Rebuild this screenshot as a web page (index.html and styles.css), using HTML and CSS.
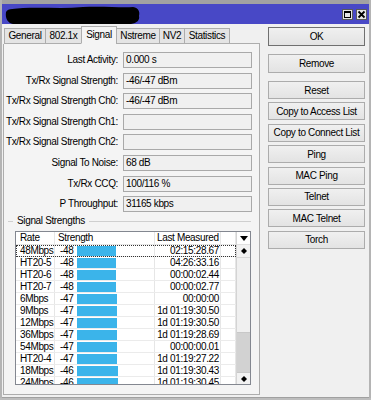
FILE: index.html
```html
<!DOCTYPE html>
<html>
<head>
<meta charset="utf-8">
<link rel="stylesheet" href="styles.css">
</head>
<body>
<div class="win">
  <div class="topstrip"></div>
  <div class="titlebar">
    <svg class="redact" width="140" height="20" viewBox="0 0 140 20"><path d="M3 8 C5 4 12 5 20 4 C40 3 60 5 80 3 C100 2 120 4 130 3 C136 4 137 8 136 12 C137 16 134 19 128 20 L10 20 C5 19 2 15 3 8 Z" fill="#000"/></svg>
    <div class="tbtns">
      <span class="tbtn"><svg width="9" height="9" viewBox="0 0 9 9"><rect x="1.5" y="1.5" width="6" height="6" fill="none" stroke="#000" stroke-width="1"/><rect x="1" y="1" width="7" height="2" fill="#000"/></svg></span>
      <span class="tbtn"><svg width="9" height="9" viewBox="0 0 9 9"><path d="M1.5 1.5 L7.5 7.5 M7.5 1.5 L1.5 7.5" stroke="#000" stroke-width="1.8"/></svg></span>
    </div>
  </div>
  <div class="client">
    <div class="lcol">
      <div class="tabs">
        <div class="tab">General</div>
        <div class="tab">802.1x</div>
        <div class="tab sel">Signal</div>
        <div class="tab">Nstreme</div>
        <div class="tab">NV2</div>
        <div class="tab">Statistics</div>
        <div class="tabfill"></div>
      </div>
      <div class="panel">
        <div class="form">
          <div class="row"><span class="lbl">Last Activity:</span><span class="box">0.000 s</span></div>
          <div class="row"><span class="lbl">Tx/Rx Signal Strength:</span><span class="box">-46/-47 dBm</span></div>
          <div class="row"><span class="lbl">Tx/Rx Signal Strength Ch0:</span><span class="box">-46/-47 dBm</span></div>
          <div class="row"><span class="lbl">Tx/Rx Signal Strength Ch1:</span><span class="box"></span></div>
          <div class="row"><span class="lbl">Tx/Rx Signal Strength Ch2:</span><span class="box"></span></div>
          <div class="row"><span class="lbl">Signal To Noise:</span><span class="box">68 dB</span></div>
          <div class="row"><span class="lbl">Tx/Rx CCQ:</span><span class="box">100/116 %</span></div>
          <div class="row"><span class="lbl">P Throughput:</span><span class="box">31165 kbps</span></div>
        </div>
        <div class="group"><span class="gls"></span><span class="gt">Signal Strengths</span><span class="gll"></span></div>
        <div class="table">
          <div class="list">
            <div class="th"><span class="c1">Rate</span><span class="c2">Strength</span><span class="c3">Last Measured</span><span class="c4"></span></div>
            <div class="tr focus"><span class="c1">48Mbps</span><span class="c2"><span class="num">-48</span><span class="bar" style="width:39px"></span></span><span class="c3">02:15:28.67</span><span class="c4"></span></div>
            <div class="tr"><span class="c1">HT20-5</span><span class="c2"><span class="num">-48</span><span class="bar" style="width:39px"></span></span><span class="c3">04:26:33.16</span><span class="c4"></span></div>
            <div class="tr"><span class="c1">HT20-6</span><span class="c2"><span class="num">-48</span><span class="bar" style="width:39px"></span></span><span class="c3">00:00:02.44</span><span class="c4"></span></div>
            <div class="tr"><span class="c1">HT20-7</span><span class="c2"><span class="num">-48</span><span class="bar" style="width:39px"></span></span><span class="c3">00:00:02.77</span><span class="c4"></span></div>
            <div class="tr"><span class="c1">6Mbps</span><span class="c2"><span class="num">-47</span><span class="bar" style="width:40px"></span></span><span class="c3">00:00:00</span><span class="c4"></span></div>
            <div class="tr"><span class="c1">9Mbps</span><span class="c2"><span class="num">-47</span><span class="bar" style="width:40px"></span></span><span class="c3">1d 01:19:30.50</span><span class="c4"></span></div>
            <div class="tr"><span class="c1">12Mbps</span><span class="c2"><span class="num">-47</span><span class="bar" style="width:40px"></span></span><span class="c3">1d 01:19:30.50</span><span class="c4"></span></div>
            <div class="tr"><span class="c1">36Mbps</span><span class="c2"><span class="num">-47</span><span class="bar" style="width:40px"></span></span><span class="c3">1d 01:19:28.69</span><span class="c4"></span></div>
            <div class="tr"><span class="c1">54Mbps</span><span class="c2"><span class="num">-47</span><span class="bar" style="width:40px"></span></span><span class="c3">00:00:00.01</span><span class="c4"></span></div>
            <div class="tr"><span class="c1">HT20-4</span><span class="c2"><span class="num">-47</span><span class="bar" style="width:40px"></span></span><span class="c3">1d 01:19:27.22</span><span class="c4"></span></div>
            <div class="tr"><span class="c1">18Mbps</span><span class="c2"><span class="num">-46</span><span class="bar" style="width:41px"></span></span><span class="c3">1d 01:19:30.43</span><span class="c4"></span></div>
            <div class="tr"><span class="c1">24Mbps</span><span class="c2"><span class="num">-46</span><span class="bar" style="width:41px"></span></span><span class="c3">1d 01:19:30.45</span><span class="c4"></span></div>
          </div>
          <div class="sbar">
            <div class="sh"><svg width="8" height="5" viewBox="0 0 8 5"><path d="M0 0 H8 L4 5 Z" fill="#000"/></svg></div>
            <div class="sbtn"><svg width="6" height="6" viewBox="0 0 6 6"><path d="M3 0 L6 3 L3 6 L0 3 Z" fill="#000"/></svg></div>
            <div class="strack"></div>
            <div class="sthumb"></div>
            <div class="sbtn dn"><svg width="6" height="6" viewBox="0 0 6 6"><path d="M3 0 L6 3 L3 6 L0 3 Z" fill="#000"/></svg></div>
          </div>
        </div>
      </div>
    </div>
    <div class="rcol">
      <div class="btn big ok">OK</div>
      <div class="btn big sp">Remove</div>
      <div class="btn sp">Reset</div>
      <div class="btn">Copy to Access List</div>
      <div class="btn">Copy to Connect List</div>
      <div class="btn">Ping</div>
      <div class="btn">MAC Ping</div>
      <div class="btn">Telnet</div>
      <div class="btn">MAC Telnet</div>
      <div class="btn">Torch</div>
    </div>
  </div>
</div>
</body>
</html>
```

FILE: styles.css
```css
* { box-sizing: border-box; margin: 0; padding: 0; }
html, body { width: 371px; height: 400px; overflow: hidden; }
body {
  background: #bdbdbd;
  font-family: "Liberation Sans", Arial, sans-serif;
  font-size: 10px;
  letter-spacing: -0.35px;
  color: #000;
}
.win {
  width: 371px;
  height: 398px;
  display: flex;
  flex-direction: column;
  background: #f0f0f0;
  border-left: 2px solid #b4b4b4;
  border-right: 2px solid #b4b4b4;
}
.topstrip { height: 4px; background: #a2a2a2; }
.titlebar {
  height: 20px;
  background: #4848c6;
  display: flex;
  align-items: flex-start;
}
.redact { display: block; margin-left: 1px; }
.tbtns {
  margin-left: auto;
  margin-right: 2px;
  padding-top: 5px;
  display: flex;
  gap: 3px;
}
.tbtn {
  width: 11px;
  height: 11px;
  background: #e6e6e6;
  border: 1px solid #5a5a5a;
  display: flex;
  align-items: center;
  justify-content: center;
}
.tbtn svg { display: block; }
.client {
  flex: 1;
  display: flex;
  padding: 2px 0 2px 1px;
  border-bottom: 1px solid #a0a0a0;
}
.lcol { width: 257px; display: flex; flex-direction: column; }
.tabs { height: 18px; display: flex; align-items: flex-end; padding-left: 1px; }
.tab {
  height: 16px;
  border: 1px solid #adadad;
  margin-right: -1px;
  background: #e4e4e4;
  text-align: center;
  line-height: 14px;
  white-space: nowrap;
}
.tab:nth-child(1) { width: 42px; }
.tab:nth-child(2) { width: 37px; }
.tab:nth-child(3) { width: 36px; }
.tab:nth-child(4) { width: 44px; }
.tab:nth-child(5) { width: 26px; }
.tab:nth-child(6) { width: 46px; }
.tab.sel {
  height: 18px;
  background: #f4f4f4;
  border-bottom-color: #f4f4f4;
  line-height: 15px;
}
.tabfill { flex: 1; height: 18px; border-bottom: 1px solid #adadad; margin-left: 1px; }
.panel {
  flex: 1;
  background: #f4f4f4;
  border: 1px solid #adadad;
  border-top: none;
  padding-top: 8px;
}
.form { display: flex; flex-direction: column; gap: 4.6px; }
.row { display: flex; height: 16px; }
.lbl { width: 114px; text-align: right; line-height: 16px; white-space: nowrap; }
.box {
  width: 129px;
  margin-left: 5px;
  border: 1px solid #a9a9a9;
  background: #f0f0f0;
  padding-left: 2px;
  line-height: 14px;
  white-space: nowrap;
}
.group { display: flex; align-items: center; height: 12px; margin-top: 3px; }
.gls { width: 5px; margin-left: 4px; border-top: 1px solid #cfcfcf; }
.gt { padding: 0 4px; line-height: 12px; }
.gll { flex: 1; margin-right: 8px; border-top: 1px solid #cfcfcf; }
.table {
  margin: 4px 8px 0 11px;
  height: 154px;
  border: 1px solid #838790;
  background: #fff;
  display: grid;
  grid-template-columns: 220px 14px;
  overflow: hidden;
}
.list { overflow: hidden; }
.th, .tr {
  display: grid;
  grid-template-columns: 39px 100px 66px 15px;
  white-space: nowrap;
}
.th { height: 13px; line-height: 12px; border-bottom: 1px solid #e6e6e6; }
.tr { height: 12px; line-height: 11px; border-bottom: 1px solid #ebebeb; }
.th > span, .tr > span { border-right: 1px solid #e6e6e6; overflow: hidden; }
.c1 { padding-left: 4px; }
.th .c2 { padding-left: 3px; }
.th .c3 { padding-left: 2px; }
.tr .c2 { display: flex; align-items: flex-start; }
.num { width: 22px; padding-left: 5px; flex: none; }
.bar { height: 10px; margin-top: 1px; background: #3bb4ea; flex: none; }
.tr .c3 { text-align: right; padding-right: 1px; }
.focus { outline: 1px dotted #333; outline-offset: -1px; }
.sbar {
  display: flex;
  flex-direction: column;
  border-left: 1px solid #d4d4d4;
  background: #f0f0f0;
}
.sh {
  height: 13px;
  background: #fff;
  display: flex;
  align-items: center;
  justify-content: center;
  border-bottom: 1px solid #e0e0e0;
}
.sbtn {
  height: 13px;
  background: #f2f2f2;
  border-bottom: 1px solid #d8d8d8;
  display: flex;
  align-items: center;
  justify-content: center;
}
.sbtn.dn { height: 12px; border-bottom: none; border-top: 1px solid #c8c8c8; }
.strack { height: 75px; background: #f0f0f0; border-bottom: 1px solid #c8c8c8; }
.sthumb { height: 39px; background: #d2d2d2; }
.rcol { width: 97px; margin-left: 8px; padding-top: 1px; display: flex; flex-direction: column; }
.btn {
  height: 18px;
  margin-top: 3.4px;
  border: 1px solid #acacac;
  background: linear-gradient(#f0f0f0, #e3e3e3);
  display: flex;
  align-items: center;
  justify-content: center;
  white-space: nowrap;
}
.btn.big { height: 19px; }
.btn.ok { margin-top: 0; border-color: #707070; }
.btn.sp { margin-top: 8px; }
```
